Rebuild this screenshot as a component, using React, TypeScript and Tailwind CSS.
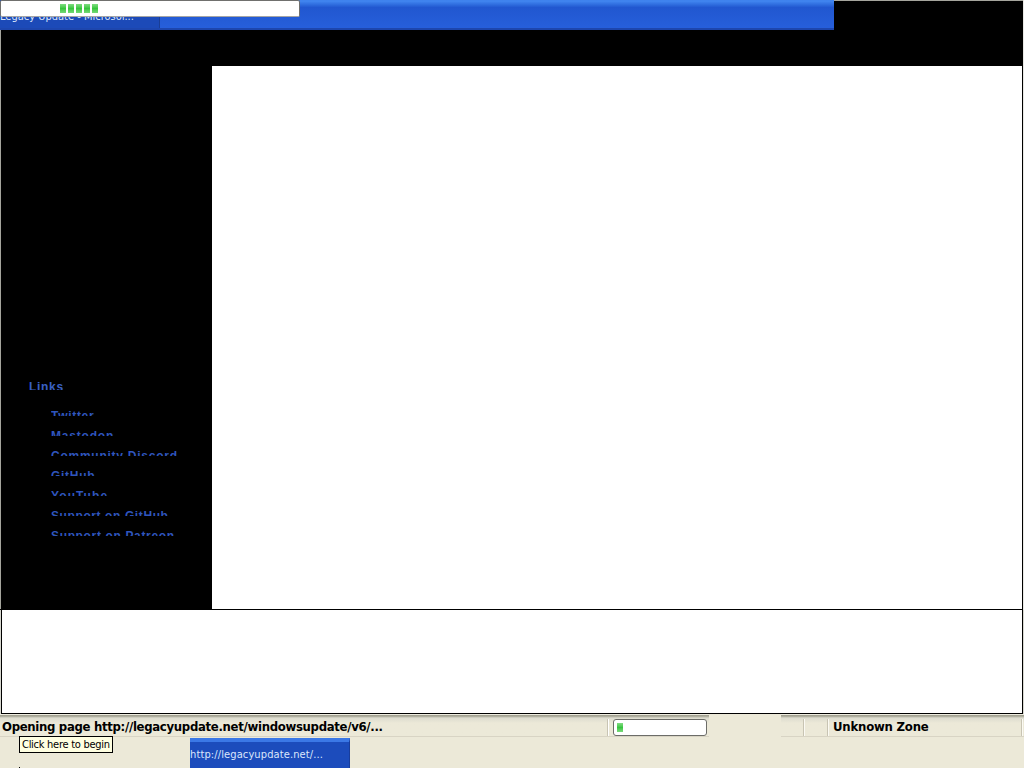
import { FC } from "react";

type SidebarLinkProps = {
  label: string;
  spacing: string;
};

const links: SidebarLinkProps[] = [
  { label: "Twitter", spacing: "tracking-[0.7px]" },
  { label: "Mastodon", spacing: "tracking-[0.8px]" },
  { label: "Community Discord", spacing: "tracking-[0.75px]" },
  { label: "GitHub", spacing: "tracking-[0.7px]" },
  { label: "YouTube", spacing: "tracking-[1.1px]" },
  { label: "Support on GitHub", spacing: "tracking-[0.6px]" },
  { label: "Support on Patreon", spacing: "tracking-[0.65px]" },
];

const SidebarLink: FC<SidebarLinkProps> = ({ label, spacing }) => (
  <li className="h-5">
    <div className="h-[6px] overflow-hidden">
      <a className={`block whitespace-nowrap text-[12px] font-bold leading-[14px] -mt-[1px] text-[#2f55bd] ${spacing}`}>
        {label}
      </a>
    </div>
  </li>
);

const Sidebar: FC = () => (
  <nav className="w-[211px] shrink-0 bg-black pl-7 pt-[314px] font-['Liberation_Sans',sans-serif]">
    <div className="h-[10px] overflow-hidden">
      <h2 className="text-[12px] font-bold leading-[14px] tracking-[0.7px] text-[#3a60c4]">Links</h2>
    </div>
    <ul className="mt-5 pl-[22px]">
      {links.map((link) => (
        <SidebarLink key={link.label} {...link} />
      ))}
    </ul>
  </nav>
);

const TitleStrip: FC = () => (
  <div className="relative h-[30px] w-[834px] bg-linear-to-b from-[#3f83ee] from-5% via-[#2157d0] via-25% to-[#2760dc]">
    <div className="h-[28px] w-[160px] overflow-hidden border-r border-[#1a3e95] bg-[#1c4ab8] pt-[10px]">
      <span className="block whitespace-nowrap font-['DejaVu_Sans_Condensed','DejaVu_Sans',sans-serif] text-[11px] leading-[14px] text-[#dbe6fb]">
        Legacy Update - Microsof...
      </span>
    </div>
    <div className="absolute inset-x-0 bottom-0 h-[2px] bg-[#1d46ae]" />
    {/* progress bar drawn over the task button */}
    <div className="absolute left-0 top-0 flex h-[17px] w-[300px] gap-[2px] rounded-[2px] border border-[#70706e] border-b-[#a5a5a5] bg-white pl-[59px] pt-[3px]">
      {[0, 1, 2, 3, 4].map((block) => (
        <span key={block} className="h-[9px] w-[6px] bg-linear-to-b from-[#7ddd80] via-[#36c63d] to-[#74d976]" />
      ))}
    </div>
  </div>
);

const StatusBar: FC = () => (
  <div className="flex h-[23px] shrink-0 font-['DejaVu_Sans_Condensed','DejaVu_Sans',sans-serif] text-[13px] font-bold text-black">
    <div className="flex w-[709px] border-b border-[#d8d4c4] border-t border-t-[#eeecdf] bg-linear-to-b from-[#a3a292] from-[1px] via-[#dddccf] via-[3px] to-[#ece9d8] to-[8px]">
      <span className="w-[607px] whitespace-nowrap pl-[2px] pt-[3px] leading-[18px] tracking-[-0.31px]">
        Opening page http://legacyupdate.net/windowsupdate/v6/...
      </span>
      <div className="mt-[4px] h-[17px] w-[2px] border-l border-[#c8c4b3] bg-white" />
      <div className="ml-1 mt-[4px] h-[17px] w-[94px] rounded-[3px] border border-[#6c6c68] bg-white pl-[3px] pt-[3px]">
        <div className="h-[9px] w-[6px] bg-linear-to-b from-[#82dc84] via-[#38c540] to-[#79d97b]" />
      </div>
    </div>
    <div className="w-[72px]" />
    <div className="flex flex-1 border-b border-[#d8d4c4] border-t border-t-[#eeecdf] bg-linear-to-b from-[#a3a292] from-[1px] via-[#dddccf] via-[3px] to-[#ece9d8] to-[8px]">
      <div className="ml-[22px] mt-[4px] h-[17px] w-[2px] border-l border-[#c8c4b3] bg-[#fbfaf3]" />
      <div className="ml-[22px] mt-[4px] h-[17px] w-[2px] border-l border-[#c8c4b3] bg-[#fbfaf3]" />
      <span className="ml-[4px] whitespace-nowrap pt-[3px] leading-[18px] tracking-[-0.2px]">Unknown Zone</span>
      <div className="ml-auto mr-[1px] mt-[4px] h-[17px] w-[2px] border-l border-[#c8c4b3] bg-[#fbfaf3]" />
    </div>
  </div>
);

const Taskbar: FC = () => (
  <div className="relative flex h-[31px] shrink-0 font-['DejaVu_Sans_Condensed','DejaVu_Sans',sans-serif] text-[11px]">
    <div className="absolute left-[19px] top-[-1px] h-[17px] w-[94px] whitespace-nowrap border border-black bg-[#ffffe1] pl-[2px] leading-[16px] tracking-[-0.27px] text-black">
      Click here to begin
    </div>
    <div className="ml-[19px] mt-[30px] h-px w-px bg-black" />
    <div className="ml-[170px] mt-[1px] h-[30px] w-[160px] border-t-[4px] border-r border-t-[#3b78e6] border-r-[#183d9c] bg-[#1c4cbc] pt-[6px] leading-[14px] tracking-[0.12px] text-[#dbe6fb]">
      http://legacyupdate.net/...
    </div>
  </div>
);

export default function App() {
  return (
    <div className="flex h-[768px] w-[1024px] flex-col overflow-hidden bg-[#ece9d8]">
      <div className="flex h-[610px] shrink-0 flex-col border-r border-r-[#e8e8e4] bg-black">
        <div className="h-[66px] border-l border-l-[#a5a59d] bg-black">
          <div className="-ml-px border-t border-[#a5a59d]">
            <div className="-mt-px">
              <TitleStrip />
            </div>
          </div>
        </div>
        <div className="flex h-[543px] border-l border-l-[#a5a59d]">
          <Sidebar />
          <main className="mr-px flex-1 bg-white" />
        </div>
      </div>
      <div className="h-[104px] shrink-0 border-x border-x-[#d8d8d0] bg-white">
        <div className="h-full border-x border-b border-black" />
      </div>
      <StatusBar />
      <Taskbar />
    </div>
  );
}
